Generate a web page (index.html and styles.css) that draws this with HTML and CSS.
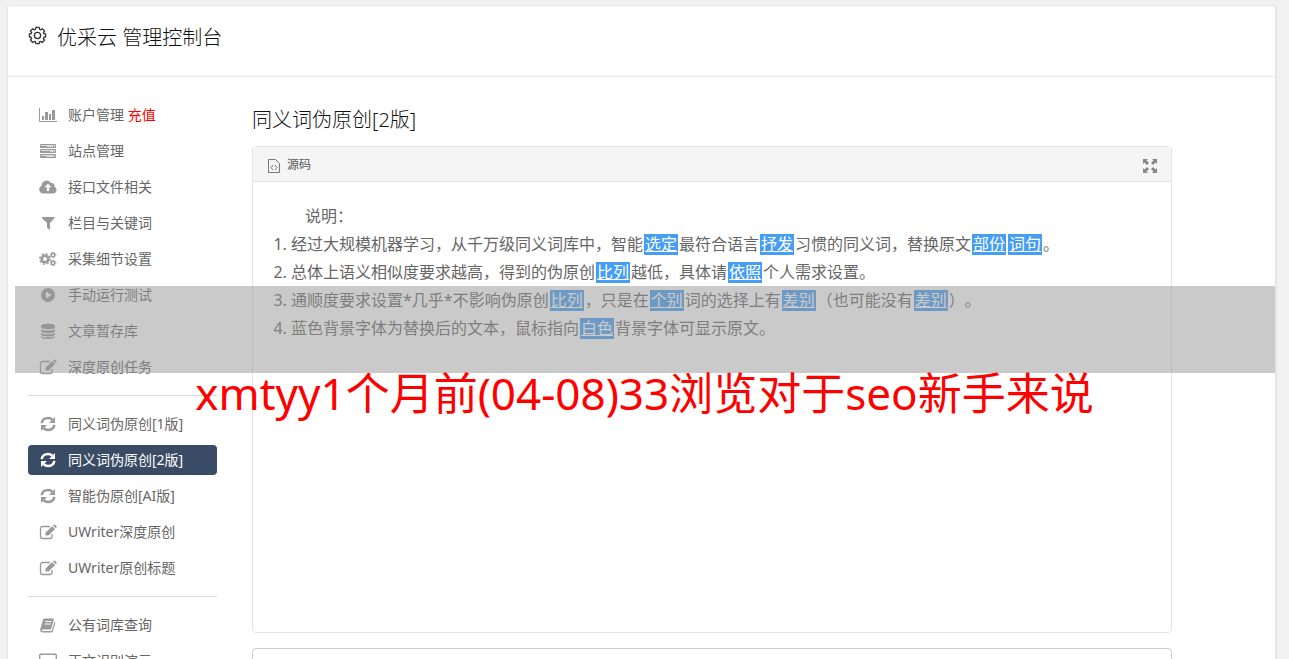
FILE: index.html
```html
<!DOCTYPE html>
<html lang="zh-Hans">
<head>
  <meta charset="utf-8">
  <title>优采云 管理控制台</title>
  <link rel="stylesheet" href="styles.css">
</head>
<body>
  <!-- 图标 -->
  <svg class="symbols" aria-hidden="true">
    <symbol id="i-chart" viewBox="0 0 18 16"><path d="M.5 1v13.500H18" fill="none" stroke="currentColor"/><path d="M3 9h2v4H3zM6 5h3v8H6zM10 7h2v6h-2zM13 3h3v10h-3z"/></symbol>
    <symbol id="i-server" viewBox="0 0 18 16"><path d="M1.500 1.500h15v3h-15zM1.500 6.500h15v3h-15zM1.500 11.500h15v3h-15z" fill="#ddd" stroke="currentColor"/><path d="M2 3h6v1H2zM2 8h9v1H2zM2 13h5v1H2zM14 3h1v1h-1zM14 8h1v1h-1zM14 13h1v1h-1z"/></symbol>
    <symbol id="i-cloud" viewBox="0 0 18 16"><path fill-rule="evenodd" d="M4.500 14.500A4.200 4.200 0 0 1 2.700 6.500 5 5 0 0 1 12 4a3 3 0 0 1 3.500 3.800 3.500 3.500 0 0 1-1.200 6.700zM9 4.500 5.500 8.200h2.300V12h2.400V8.200h2.300z"/></symbol>
    <symbol id="i-filter" viewBox="0 0 18 16"><path d="M3 2h12.500v1L11 8v7l-3-2.500V8L3 3z"/></symbol>
    <symbol id="i-cogs" viewBox="0 0 18 16"><g fill="none" stroke="currentColor"><circle cx="6" cy="8" r="3.300" stroke-width="2.600"/><circle cx="6" cy="8" r="5.200" stroke-width="1.500" stroke-dasharray="2 2.080"/><circle cx="14" cy="4" r="1.700" stroke-width="1.400"/><circle cx="14" cy="4" r="2.800" stroke-dasharray="1.200 1"/><circle cx="14" cy="12" r="1.700" stroke-width="1.400"/><circle cx="14" cy="12" r="2.800" stroke-dasharray="1.200 1"/></g></symbol>
    <symbol id="i-play" viewBox="0 0 18 16"><path fill-rule="evenodd" d="M9 1a7 7 0 1 0 0 14A7 7 0 0 0 9 1zM7 4.500 12.500 8 7 11.500z"/></symbol>
    <symbol id="i-database" viewBox="0 0 18 16"><path d="M2 3c0-3 14-3 14 0v1c0 3-14 3-14 0zM2 6c2 2 12 2 14 0v2c0 3-14 3-14 0zM2 9.700c2 2 12 2 14 0v1.600c0 3-14 3-14 0zM2 13c2 2 12 2 14 0v.8c0 3-14 3-14 0z"/></symbol>
    <symbol id="i-edit" viewBox="0 0 18 16"><path d="M11 2.500H3.500a2 2 0 0 0-2 2v8a2 2 0 0 0 2 2H11a2 2 0 0 0 2-2V10" fill="none" stroke="currentColor" stroke-width="1.300"/><path d="m13.200 2.300 2.800 2.800L9.500 11.500h-3v-3zM14 1.500l.8-.8q.6-.5 1.200 0l1.500 1.500q.5.600 0 1.200l-.8.900z"/></symbol>
    <symbol id="i-refresh" viewBox="0 0 18 16"><path d="M2.700 7.200C3 4 6 2 9 2c1.800 0 3.300.7 4.400 1.700M15.300 8.800C15 12 12 14 9 14c-1.800 0-3.300-.7-4.400-1.700" fill="none" stroke="currentColor" stroke-width="2.600"/><path d="M16 1v6h-6zM2 15V9h6z"/></symbol>
    <symbol id="i-book" viewBox="0 0 18 16"><path fill-rule="evenodd" d="M5.500 1.500H14q1 0 .8 1l-2.500 9q-.3 1-1.300 1H3.500q-1 0-.8.800 0 .7 1 .7h8q1 0 1.300-1l2.500-8.500q1 .4.700 1.500L14 14q-.5 1.500-2 1.500H3.500Q1.200 15.300 1 13l3-10.200q.4-1.300 1.500-1.300zM6.500 4l-.3 1h6l.3-1zM5.800 6.500l-.3 1h6l.3-1z"/></symbol>
    <symbol id="i-screen" viewBox="0 0 18 16"><rect x=".7" y="1.200" width="16.600" height="11" rx="1" fill="none" stroke="currentColor" stroke-width="1.400"/><path d="M5 14h8v1H5z"/></symbol>
  </svg>

  <div class="panel">
    <header class="panel-header">
      <svg class="gear" viewBox="0 0 20 20" fill="none" stroke="#333" stroke-width="1.400" aria-hidden="true">
        <path d="M8.300 1.500h3.400l.5 2 1 .5 2-1 2.200 2.400-1.200 1.700.5 1 1.800.4v3l-1.800.5-.5 1.100 1.200 1.700-2.200 2.400-2-1-1 .4-.5 1.900H8.300l-.5-1.900-1-.4-2 1-2.200-2.400 1.200-1.700-.5-1.100-1.800-.5v-3l1.800-.4.5-1-1.200-1.700L4.800 3l2 1 1-.5z"/>
        <circle cx="10" cy="10" r="3.300"/>
      </svg>
      <h1>优采云 管理控制台</h1>
    </header>

    <div class="content">
      <!-- 左侧菜单 -->
      <nav class="sidebar">
        <ul>
          <li><a href="#"><svg><use href="#i-chart"/></svg><span>账户管理 <b>充值</b></span></a></li>
          <li><a href="#"><svg><use href="#i-server"/></svg>站点管理</a></li>
          <li><a href="#"><svg><use href="#i-cloud"/></svg>接口文件相关</a></li>
          <li><a href="#"><svg><use href="#i-filter"/></svg>栏目与关键词</a></li>
          <li><a href="#"><svg><use href="#i-cogs"/></svg>采集细节设置</a></li>
          <li><a href="#"><svg><use href="#i-play"/></svg>手动运行测试</a></li>
          <li><a href="#"><svg><use href="#i-database"/></svg>文章暂存库</a></li>
          <li><a href="#"><svg><use href="#i-edit"/></svg>深度原创任务</a></li>
        </ul>
        <hr>
        <ul>
          <li><a href="#"><svg><use href="#i-refresh"/></svg>同义词伪原创[1版]</a></li>
          <li><a href="#" class="active"><svg><use href="#i-refresh"/></svg>同义词伪原创[2版]</a></li>
          <li><a href="#"><svg><use href="#i-refresh"/></svg>智能伪原创[AI版]</a></li>
          <li><a href="#"><svg><use href="#i-edit"/></svg>UWriter深度原创</a></li>
          <li><a href="#"><svg><use href="#i-edit"/></svg>UWriter原创标题</a></li>
        </ul>
        <hr>
        <ul>
          <li><a href="#"><svg><use href="#i-book"/></svg>公有词库查询</a></li>
          <li><a href="#"><svg><use href="#i-screen"/></svg>正文识别演示</a></li>
        </ul>
      </nav>

      <!-- 编辑器 -->
      <main class="main">
        <h2>同义词伪原创[2版]</h2>
        <div class="editor">
          <div class="toolbar">
            <button type="button" class="source">
              <svg width="12" height="14" viewBox="0 0 12 14" fill="none" stroke="#777" aria-hidden="true"><path d="M.5.500h7l4 4v9H.500zM5 6 3 8.500 5 11M7 6l2 2.500L7 11"/></svg>
              源码
            </button>
            <button type="button" class="maximize" aria-label="全屏">
              <svg width="14" height="14" viewBox="0 0 14 14" fill="#888" aria-hidden="true"><path d="M0 0h5L3.500 1.500 6 4 4 6 1.500 3.500 0 5zM14 0v5l-1.500-1.500L10 6 8 4l2.500-2.500L9 0zM0 14V9l1.500 1.500L4 8l2 2-2.500 2.500L5 14zM14 14H9l1.500-1.500L8 10l2-2 2.500 2.500L14 9z"/></svg>
            </button>
          </div>
          <div class="editor-body">
            <p>说明：</p>
            <ol>
              <li>经过大规模机器学习，从千万级同义词库中，智能<u>选定</u>最符合语言<u>抒发</u>习惯的同义词，替换原文<u>部份</u><u>词句</u>。</li>
              <li>总体上语义相似度要求越高，得到的伪原创<u>比列</u>越低，具体请<u>依照</u>个人需求设置。</li>
              <li>通顺度要求设置*几乎*不影响伪原创<u>比列</u>，只是在<u>个别</u>词的选择上有<u>差别</u>（也可能没有<u>差别</u>）。</li>
              <li>蓝色背景字体为替换后的文本，鼠标指向<u>白色</u>背景字体可显示原文。</li>
            </ol>
          </div>
        </div>
        <textarea class="result" aria-label="结果"></textarea>
      </main>
    </div>
  </div>

  <div class="band"></div>
  <div class="caption">xmtyy1个月前(04-08)33浏览对于seo新手来说</div>
</body>
</html>
```

FILE: styles.css
```css
* {
  box-sizing: border-box;
}

body {
  position: relative;
  height: 100vh;
  margin: 0;
  padding: 5px 12px 0 7px;
  overflow: hidden;
  background: #f1f1f1;
  color: #666;
  font-family: "Noto Sans", "Noto Sans CJK SC", sans-serif;
  font-size: 14px;
  text-spacing-trim: space-all;
}

.symbols {
  display: none;
}

h1,
h2 {
  margin: 0;
  color: #111;
  font-size: 20px;
  font-weight: 300;
  line-height: 32px;
}

.panel {
  background: #fff;
  border: 1px solid #e5e5e5;
  border-right-width: 2px;
  border-radius: 4px;
}

.panel-header {
  display: flex;
  gap: 10px;
  height: 71px;
  padding: 16px 20px;
  border-bottom: 1px solid #e5e5e5;
}

.gear {
  width: 19px;
  height: 19px;
  margin-top: 4px;
}

.content {
  display: flex;
  gap: 35px;
  padding: 23px 103px 20px 20px;
}

/* 左侧菜单 */
.sidebar {
  flex: 0 0 189px;
}

.sidebar ul {
  display: flex;
  flex-direction: column;
  gap: 6px;
  margin: 0;
  padding: 0;
  list-style: none;
}

.sidebar a {
  display: flex;
  align-items: center;
  gap: 11px;
  height: 30px;
  padding: 0 11px 2px;
  border-radius: 4px;
  color: #666;
  text-decoration: none;
}

.sidebar b {
  color: #f00;
  font-weight: normal;
}

.sidebar svg {
  width: 18px;
  height: 16px;
  margin-top: 2px;
  color: #999;
  fill: currentColor;
}

.sidebar .active {
  background: #3a4b66;
  color: #fff;
}

.sidebar .active svg {
  color: #fff;
}

.sidebar hr {
  height: 1px;
  margin: 13px 0;
  border: 0;
  background: #ddd;
}

/* 编辑器 */
.main {
  flex: 1;
  min-width: 0;
  padding-top: 4px;
}

.editor {
  min-height: 487px;
  margin: 10px 0 15px;
  border: 1px solid #e5e5e5;
  border-radius: 4px;
}

.toolbar {
  display: flex;
  align-items: center;
  justify-content: space-between;
  height: 35px;
  padding: 0 14px 0 15px;
  background: #f5f5f5;
  border-bottom: 1px solid #e5e5e5;
}

.toolbar button {
  display: flex;
  align-items: center;
  gap: 7px;
  padding: 0;
  border: 0;
  background: none;
  color: #555;
  font: inherit;
  font-size: 12px;
}

.toolbar svg {
  margin-top: 3px;
}

.editor-body {
  padding: 20px;
  font-size: 16px;
  line-height: 28px;
}

.editor-body p {
  margin: 0;
  text-indent: 32px;
}

.editor-body ol {
  margin: 0;
  padding-left: 18px;
}

.editor-body u {
  display: inline-block;
  margin: 0 1px;
  padding: 0 1px;
  background: #459df5;
  color: #fff;
  line-height: 21px;
}

.result {
  display: block;
  width: 100%;
  height: 120px;
  border: 1px solid #ccc;
  border-radius: 4px;
  resize: none;
}

/* 遮罩与标题 */
.band {
  position: absolute;
  top: 286px;
  right: 14px;
  left: 15px;
  height: 87px;
  background: rgba(150, 150, 150, 0.5);
}

.caption {
  position: absolute;
  top: 363px;
  right: 0;
  left: 0;
  color: #f00;
  font-size: 44px;
  line-height: 60px;
  text-align: center;
  white-space: nowrap;
}
```
